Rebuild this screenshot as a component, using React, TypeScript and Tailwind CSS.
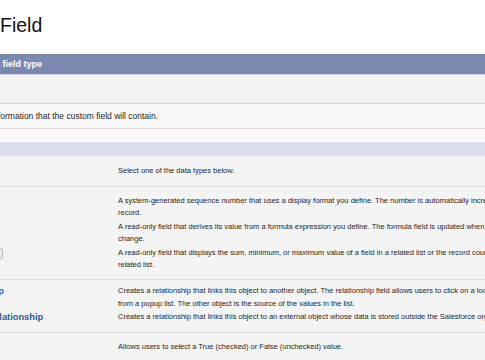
import React from "react";

const Para = ({ lines, className = "" }: { lines: string[]; className?: string }) => (
  <div className={className}>
    {lines.map((l, i) => (
      <div key={i} className="whitespace-nowrap">
        {l}
      </div>
    ))}
  </div>
);

export default function App() {
  return (
    <div className="w-[485px] h-[360px] overflow-hidden bg-white font-['Liberation_Sans',Arial,sans-serif] text-[7.5px] leading-[12.5px] text-[#262626]">
      <div className="h-[54px] pt-[14px] text-[19.5px] leading-[22px] text-[#111] whitespace-nowrap">Field</div>
      <div className="-ml-[100px] w-[1000px]">
        <div className="h-[21px] bg-[#7c89ae] border-b border-[#cdd4ea] pl-[19px] flex items-center text-white font-bold text-[9px] whitespace-nowrap">
          Step 1. Choose the field type
        </div>
        <div className="h-[29px] bg-[#f3f3f3] border-b border-[#d9d9d9]"></div>
        <div className="h-[25px] bg-[#f7f7f7] border-b border-[#dcdcdc] pl-[19px] flex items-center text-[8.5px] text-[#1f1f1f] whitespace-nowrap">
          Specify the type of information that the custom field will contain.
        </div>
        <div className="h-[13px] bg-[#faf8f8]"></div>
        <div className="h-[14px] bg-[#dbe0ec] pl-[12px] flex items-center font-bold text-[#dbe0ec]">Data Type</div>
        <div className="bg-[#f4f4f4]">
          <div className="flex h-[31px] items-center border-b border-[#dcdcdc]">
            <div className="w-[218px] shrink-0"></div>
            <div className="whitespace-nowrap">Select one of the data types below.</div>
          </div>
          <div className="pt-[7.5px] pb-[7px] border-b border-[#dcdcdc]">
            <div className="flex mb-[1px]">
              <div className="w-[218px] shrink-0 pl-[12px]"></div>
              <Para
                lines={[
                  "A system-generated sequence number that uses a display format you define. The number is automatically incremented for each new",
                  "record.",
                ]}
              />
            </div>
            <div className="flex mb-[1px]">
              <div className="w-[218px] shrink-0 pl-[12px]"></div>
              <Para
                lines={[
                  "A read-only field that derives its value from a formula expression you define. The formula field is updated when any of the source fields",
                  "change.",
                ]}
              />
            </div>
            <div className="flex">
              <div className="w-[218px] shrink-0 flex items-start">
                <div className="w-[90px] shrink-0"></div>
                <div className="w-[13px] h-[11px] mt-[1px] rounded-[2px] border border-[#b9b9b9] bg-[#ececec]"></div>
              </div>
              <Para
                lines={[
                  "A read-only field that displays the sum, minimum, or maximum value of a field in a related list or the record count of all records listed in a",
                  "related list.",
                ]}
              />
            </div>
          </div>
          <div className="pt-[5.5px] pb-[9px] border-b border-[#dcdcdc]">
            <div className="flex mb-[0.5px]">
              <div className="w-[218px] shrink-0 pl-[12px] font-bold text-[9.3px] text-[#34598c] whitespace-nowrap">Lookup Relationship</div>
              <Para
                lines={[
                  "Creates a relationship that links this object to another object. The relationship field allows users to click on a lookup icon to select a value",
                  "from a popup list. The other object is the source of the values in the list.",
                ]}
              />
            </div>
            <div className="flex">
              <div className="w-[218px] shrink-0 pl-[12px] font-bold text-[9.3px] text-[#34598c] whitespace-nowrap">External Lookup Relationship</div>
              <Para
                lines={[
                  "Creates a relationship that links this object to an external object whose data is stored outside the Salesforce org.",
                ]}
              />
            </div>
          </div>
          <div className="pt-[7.75px] pb-[8px] flex">
            <div className="w-[218px] shrink-0"></div>
            <div className="whitespace-nowrap">Allows users to select a True (checked) or False (unchecked) value.</div>
          </div>
        </div>
      </div>
    </div>
  );
}
